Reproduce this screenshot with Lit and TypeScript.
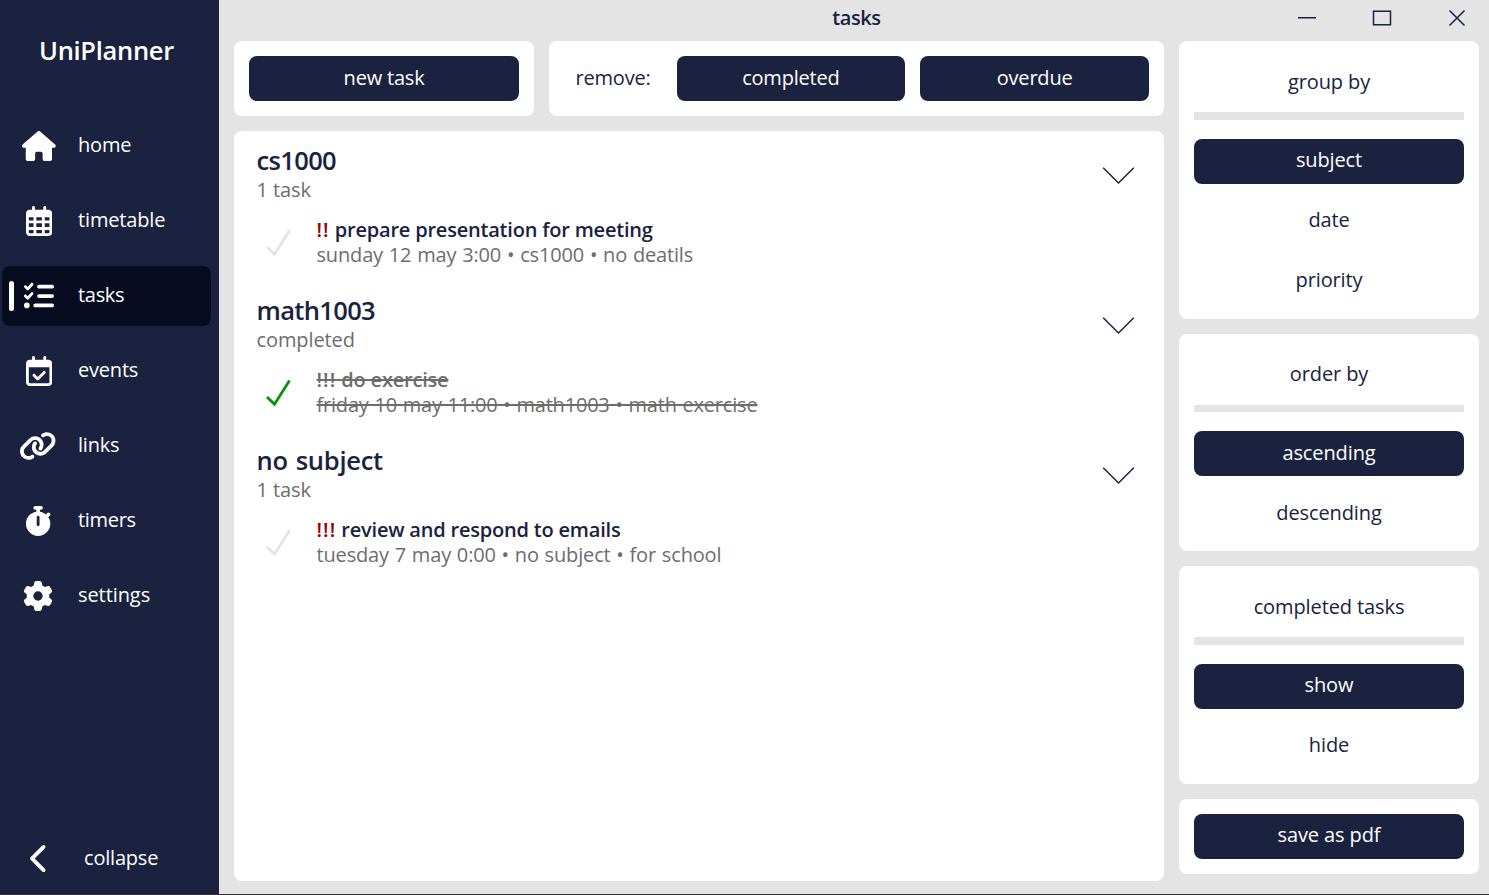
import { LitElement, html, css, svg } from "lit";
import { customElement, property } from "lit/decorators.js";
import { classMap } from "lit/directives/class-map.js";

type Icon = { w: number; d: string };

const ICONS: Record<string, Icon> = {
  home: { w: 576, d: "M575.8 255.5c0 18-15 32.1-32 32.1h-32l.7 160.2c0 2.7-.2 5.4-.5 8.1V472c0 22.1-17.9 40-40 40H456c-1.1 0-2.2 0-3.3-.1c-1.4 .1-2.8 .1-4.2 .1H416 392c-22.1 0-40-17.9-40-40V448 384c0-17.7-14.3-32-32-32H256c-17.7 0-32 14.3-32 32v64 24c0 22.1-17.9 40-40 40H160 128.1c-1.5 0-3-.1-4.5-.2c-1.2 .1-2.4 .2-3.6 .2H104c-22.1 0-40-17.9-40-40V360c0-.9 0-1.9 .1-2.8V287.6H32c-18 0-32-14-32-32.1c0-9 3-17 10-24L266.4 8c7-7 15-8 22-8s15 2 21 7L564.8 231.5c8 7 12 15 11 24z" },
  timetable: { w: 448, d: "M152 24c0-13.3-10.7-24-24-24s-24 10.7-24 24V64H64C28.7 64 0 92.7 0 128v16 48V448c0 35.3 28.7 64 64 64H384c35.3 0 64-28.7 64-64V192 144 128c0-35.3-28.7-64-64-64H344V24c0-13.3-10.7-24-24-24s-24 10.7-24 24V64H152V24zM48 192h80v56H48V192zm0 104h80v64H48V296zm128 0h96v64H176V296zm144 0h80v64H320V296zm80-48H320V192h80v56zm0 160v40c0 8.8-7.2 16-16 16H320V408h80zm-128 0v56H176V408h96zm-144 0v56H64c-8.8 0-16-7.2-16-16V408h80zM272 248H176V192h96v56z" },
  tasks: { w: 512, d: "M152.1 38.2c9.9 8.9 10.7 24 1.8 33.9l-72 80c-4.4 4.9-10.6 7.8-17.2 7.9s-12.9-2.4-17.6-7L7 113C-2.3 103.6-2.3 88.4 7 79s24.6-9.4 33.9 0l22.1 22.1 55.1-61.2c8.9-9.9 24-10.7 33.9-1.8zm0 160c9.9 8.9 10.7 24 1.8 33.9l-72 80c-4.4 4.9-10.6 7.8-17.2 7.9s-12.9-2.4-17.6-7L7 273c-9.4-9.4-9.4-24.6 0-33.9s24.6-9.4 33.9 0l22.1 22.1 55.1-61.2c8.9-9.9 24-10.7 33.9-1.8zM224 96c0-17.7 14.3-32 32-32H480c17.7 0 32 14.3 32 32s-14.3 32-32 32H256c-17.7 0-32-14.3-32-32zm0 160c0-17.7 14.3-32 32-32H480c17.7 0 32 14.3 32 32s-14.3 32-32 32H256c-17.7 0-32-14.3-32-32zM160 416c0-17.7 14.3-32 32-32H480c17.7 0 32 14.3 32 32s-14.3 32-32 32H192c-17.7 0-32-14.3-32-32zM48 368a48 48 0 1 1 0 96 48 48 0 1 1 0-96z" },
  events: { w: 448, d: "M128 0c13.3 0 24 10.7 24 24V64H296V24c0-13.3 10.7-24 24-24s24 10.7 24 24V64h40c35.3 0 64 28.7 64 64v16 48V448c0 35.3-28.7 64-64 64H64c-35.3 0-64-28.7-64-64V192 144 128C0 92.7 28.7 64 64 64h40V24c0-13.3 10.7-24 24-24zM400 192H48V448c0 8.8 7.2 16 16 16H384c8.8 0 16-7.2 16-16V192zM329 297L217 409c-9.4 9.4-24.6 9.4-33.9 0l-64-64c-9.4-9.4-9.4-24.6 0-33.9s24.6-9.4 33.9 0l47 47 95-95c9.4-9.4 24.6-9.4 33.9 0s9.4 24.6 0 33.9z" },
  links: { w: 640, d: "M579.8 267.7c56.5-56.5 56.5-148 0-204.5c-50-50-128.8-56.5-186.3-15.4l-1.6 1.1c-14.4 10.3-17.7 30.3-7.4 44.6s30.3 17.7 44.6 7.4l1.6-1.1c32.1-22.9 76-19.3 103.8 8.6c31.5 31.5 31.5 82.5 0 114L422.3 334.8c-31.5 31.5-82.5 31.5-114 0c-27.9-27.9-31.5-71.8-8.6-103.8l1.1-1.6c10.3-14.4 6.9-34.4-7.4-44.6s-34.4-6.9-44.6 7.4l-1.1 1.6C206.5 251.2 213 330 263 380c56.5 56.5 148 56.5 204.5 0L579.8 267.7zM60.2 244.3c-56.5 56.5-56.5 148 0 204.5c50 50 128.8 56.5 186.3 15.4l1.6-1.1c14.4-10.3 17.7-30.3 7.4-44.6s-30.3-17.7-44.6-7.4l-1.6 1.1c-32.1 22.9-76 19.3-103.8-8.6C74 372 74 321 105.5 289.5L217.7 177.2c31.5-31.5 82.5-31.5 114 0c27.9 27.9 31.5 71.8 8.6 103.9l-1.1 1.6c-10.3 14.4-6.9 34.4 7.4 44.6s34.4 6.9 44.6-7.4l1.1-1.6C433.5 260.8 427 182 377 132c-56.5-56.5-148-56.5-204.5 0L60.2 244.3z" },
  timers: { w: 448, d: "M176 0c-17.7 0-32 14.3-32 32s14.3 32 32 32h16V98.4C92.3 113.8 16 200 16 304c0 114.9 93.1 208 208 208s208-93.1 208-208c0-41.8-12.3-80.7-33.5-113.2l24.1-24.1c12.5-12.5 12.5-32.8 0-45.3s-32.8-12.5-45.3 0L355.7 143c-28.1-23-62.2-38.8-99.7-44.6V64h16c17.7 0 32-14.3 32-32s-14.3-32-32-32H224 176zm72 192V320c0 13.3-10.7 24-24 24s-24-10.7-24-24V192c0-13.3 10.7-24 24-24s24 10.7 24 24z" },
  settings: { w: 512, d: "M495.9 166.6c3.2 8.7 .5 18.4-6.4 24.6l-43.3 39.4c1.1 8.3 1.7 16.8 1.7 25.4s-.6 17.1-1.7 25.4l43.3 39.4c6.9 6.2 9.6 15.9 6.4 24.6c-4.4 11.9-9.7 23.3-15.8 34.3l-4.7 8.1c-6.6 11-14 21.4-22.1 31.2c-5.9 7.2-15.7 9.6-24.5 6.8l-55.7-17.7c-13.4 10.3-28.2 18.9-44 25.4l-12.5 57.1c-2 9.1-9 16.3-18.2 17.8c-13.8 2.3-28 3.5-42.5 3.5s-28.7-1.2-42.5-3.5c-9.2-1.5-16.2-8.7-18.2-17.8l-12.5-57.1c-15.8-6.5-30.6-15.1-44-25.4L83.1 425.9c-8.8 2.8-18.6 .3-24.5-6.8c-8.1-9.8-15.5-20.2-22.1-31.2l-4.7-8.1c-6.1-11-11.4-22.4-15.8-34.3c-3.2-8.7-.5-18.4 6.4-24.6l43.3-39.4C64.6 273.1 64 264.6 64 256s.6-17.1 1.7-25.4L22.4 191.2c-6.9-6.2-9.6-15.9-6.4-24.6c4.4-11.9 9.7-23.3 15.8-34.3l4.7-8.1c6.6-11 14-21.4 22.1-31.2c5.9-7.2 15.7-9.6 24.5-6.8l55.7 17.7c13.4-10.3 28.2-18.9 44-25.4l12.5-57.1c2-9.1 9-16.3 18.2-17.8C227.3 1.2 241.5 0 256 0s28.7 1.2 42.5 3.5c9.2 1.5 16.2 8.7 18.2 17.8l12.5 57.1c15.8 6.5 30.6 15.1 44 25.4l55.7-17.7c8.8-2.8 18.6-.3 24.5 6.8c8.1 9.8 15.5 20.2 22.1 31.2l4.7 8.1c6.1 11 11.4 22.4 15.8 34.3zM256 336a80 80 0 1 0 0-160 80 80 0 1 0 0 160z" },
  collapse: { w: 320, d: "M9.4 233.4c-12.5 12.5-12.5 32.8 0 45.3l192 192c12.5 12.5 32.8 12.5 45.3 0s12.5-32.8 0-45.3L77.3 256 246.6 86.6c12.5-12.5 12.5-32.8 0-45.3s-32.8-12.5-45.3 0l-192 192z" },
};

const glyph = (name: string) => {
  const i = ICONS[name];
  return html`<svg class="glyph" viewBox="0 0 ${i.w} 512">${svg`<path d=${i.d}></path>`}</svg>`;
};

@customElement("nav-item")
class NavItem extends LitElement {
  @property() name = "";
  @property({ type: Boolean }) active = false;

  static styles = css`
    :host { display: block; height: 60px; }
    .item {
      display: grid; grid-template-columns: 76px 1fr; align-items: center;
      box-sizing: border-box; height: 60px; width: 209.4px; margin-left: 2px;
      border-radius: 8px; color: #fff; position: relative;
    }
    .active { background: #060b20; }
    .bar {
      position: absolute; left: 7px; top: 15px; width: 5px; height: 30px;
      border-radius: 2.5px; background: #fff;
    }
    .icon { display: flex; justify-content: center; padding-right: 2px; }
    .shift { padding-right: 4px; }
    .glyph { height: 30px; width: auto; fill: #fff; display: block; }
    .label { line-height: 28px; padding-bottom: 2px; }
    .timetable { letter-spacing: -0.15px; }
    .tasks, .timers { letter-spacing: -0.3px; }
    .settings { letter-spacing: -0.08px; }
  `;

  render() {
    const shift = ["links", "timers", "settings"].includes(this.name);
    return html`<div class=${classMap({ item: true, active: this.active })}>
      ${this.active ? html`<span class="bar"></span>` : null}
      <span class=${classMap({ icon: true, shift })}>${glyph(this.name)}</span>
      <span class="label ${this.name}">${this.name}</span>
    </div>`;
  }
}

@customElement("option-card")
class OptionCard extends LitElement {
  @property() heading = "";
  @property({ type: Array }) options: string[] = [];

  static styles = css`
    :host { display: block; background: #fff; border-radius: 8px; padding: 15px; }
    .heading { height: 48.5px; padding-top: 7.75px; line-height: 36px; text-align: center; box-sizing: border-box; letter-spacing: -0.1px; }
    .rule { height: 7.5px; background: #e4e4e4; margin: 7.75px 0 18.75px; }
    .options { display: grid; gap: 15px; }
    .option { height: 45px; line-height: 42.5px; text-align: center; border-radius: 8px; letter-spacing: -0.12px; }
    :host(.roomy) .option { line-height: 43px; }
    .on { background: #1a223f; color: #fff; }
  `;

  render() {
    return html`<div class="heading">${this.heading}</div>
      <div class="rule"></div>
      <div class="options">
        ${this.options.map((o, n) => html`<div class=${classMap({ option: true, on: n === 0 })}>${o}</div>`)}
      </div>`;
  }
}

type Task = { title: string; status: string; mark: string; name: string; info: string; done: boolean };

const TASKS: Task[] = [
  { title: "cs1000", status: "1 task", mark: "!!", name: "prepare presentation for meeting", info: "sunday 12 may 3:00 • cs1000 • no deatils", done: false },
  { title: "math1003", status: "completed", mark: "!!!", name: "do exercise", info: "friday 10 may 11:00 • math1003 • math exercise", done: true },
  { title: "no subject", status: "1 task", mark: "!!!", name: "review and respond to emails", info: "tuesday 7 may 0:00 • no subject • for school", done: false },
];

@customElement("task-group")
class TaskGroup extends LitElement {
  @property({ type: Object }) task!: Task;

  static styles = css`
    :host { display: block; height: 150px; }
    .head { display: flex; justify-content: space-between; height: 75px; padding: 0 29px 0 22.5px; box-sizing: border-box; }
    .title { font-size: 25.5px; font-weight: 600; line-height: 32px; padding-top: 13px; letter-spacing: -0.65px; }
    .words { letter-spacing: -0.25px; word-spacing: 1.5px; }
    .status { line-height: 28px; color: #6d6d6d; letter-spacing: -0.1px; }
    .fold { width: 33px; height: 20px; margin-top: 34px; fill: none; stroke: #1a223f; stroke-width: 1.5; }
    .task { display: flex; height: 75px; }
    .check { width: 26px; height: 28px; margin: 23px 25.5px 0 31px; fill: none; stroke: #e4e4e4; stroke-width: 2.8; flex: none; }
    .name { font-weight: 600; line-height: 25px; padding-top: 11px; }
    .info { line-height: 25px; color: #6d6d6d; word-spacing: 0.8px; letter-spacing: -0.16px; }
    .mark { color: #960000; letter-spacing: 1.1px; }
    .done .check { stroke: #0a930a; }
    .done .name, .done .info { color: #6d6d6d; text-decoration: line-through; text-decoration-thickness: 1.5px; }
    .done .info { letter-spacing: -0.2px; }
    .done .mark { color: inherit; }
  `;

  render() {
    const t = this.task;
    return html`<div class="head">
        <div>
          <div class=${classMap({ title: true, words: t.title.includes(" ") })}>${t.title}</div>
          <div class="status">${t.status}</div>
        </div>
        <svg class="fold" viewBox="0 0 33 20"><path d="M1.2 2.7 16.5 18 31.8 2.7"></path></svg>
      </div>
      <div class=${classMap({ task: true, done: t.done })}>
        <svg class="check" viewBox="0 0 26 28"><path d="M2 18 9.5 25.2 24.5 1.5"></path></svg>
        <div>
          <div class="name"><span class="mark">${t.mark}</span> ${t.name}</div>
          <div class="info">${t.info}</div>
        </div>
      </div>`;
  }
}

@customElement("app-root")
class AppRoot extends LitElement {
  static styles = css`
    :host {
      display: grid; grid-template-columns: 219px 1fr; box-sizing: border-box;
      width: 1489px; height: 895px; overflow: hidden;
      background: #e4e4e4; border-bottom: 1px solid #353333; color: #1a223f;
      font: 20px "Open Sans", "Noto Sans", sans-serif; letter-spacing: -0.2px; white-space: nowrap;
    }
    .side { background: #1a223f; color: #fff; display: flex; flex-direction: column; }
    .brand { font-size: 25.5px; font-weight: 600; line-height: 36px; margin: 32px 0 48px 39px; letter-spacing: -0.3px; }
    .nav { display: grid; gap: 15px; }
    .fold { margin-top: auto; height: 71px; display: grid; grid-template-columns: 84px 1fr; align-items: center; }
    .fold .glyph { height: 31px; width: auto; fill: #fff; display: block; margin-left: 29.5px; }
    .fold .label { padding-bottom: 2px; }
    .main { display: grid; grid-template-columns: 945px 300px; grid-template-rows: 41px 840px; padding-left: 15px; }
    .bar { grid-column: 1 / -1; display: grid; grid-template-columns: 1fr 205px; }
    .caption { text-align: center; font-weight: 600; line-height: 36px; padding-left: 205px; letter-spacing: -0.4px; }
    .window { display: grid; grid-template-columns: repeat(3, 75px); margin-left: -5px; height: 36px; align-items: center; justify-items: center; }
    .window svg { width: 20px; height: 20px; fill: none; stroke: #1a223f; stroke-width: 1.5; }
    .work { display: grid; grid-template-rows: 75px 750px; gap: 15px; width: 930px; }
    .tools { display: grid; grid-template-columns: 300px 615px; gap: 15px; }
    .card { background: #fff; border-radius: 8px; padding: 15px; box-sizing: border-box; }
    .button { background: #1a223f; color: #fff; border-radius: 8px; height: 45px; line-height: 43px; text-align: center; }
    .save { line-height: 42.5px; letter-spacing: -0.12px; }
    .remove { display: grid; grid-template-columns: 112.5px 1fr 1fr; }
    .remove .button + .button { margin-left: 7.5px; }
    .remove .first { margin-right: 7.5px; }
    .prompt { line-height: 43px; padding-left: 11.5px; }
    .list { background: #fff; border-radius: 8px; }
    .options { display: grid; gap: 15px; align-content: start; }
  `;

  render() {
    return html`
      <div class="side">
        <div class="brand">UniPlanner</div>
        <div class="nav">
          ${["home", "timetable", "tasks", "events", "links", "timers", "settings"].map(
            (n) => html`<nav-item .name=${n} ?active=${n === "tasks"}></nav-item>`
          )}
        </div>
        <div class="fold">${glyph("collapse")}<span class="label">collapse</span></div>
      </div>
      <div class="main">
        <div class="bar">
          <div class="caption">tasks</div>
          <div class="window">
            <svg viewBox="0 0 20 20"><path d="M1 9.75H19"></path></svg>
            <svg viewBox="0 0 20 20"><rect x="1.5" y="3.25" width="17" height="13.5"></rect></svg>
            <svg viewBox="0 0 20 20"><path d="M2.5 2.5 17.5 17.5M17.5 2.5 2.5 17.5"></path></svg>
          </div>
        </div>
        <div class="work">
          <div class="tools">
            <div class="card"><div class="button">new task</div></div>
            <div class="card remove">
              <div class="prompt">remove:</div>
              <div class="button first">completed</div>
              <div class="button">overdue</div>
            </div>
          </div>
          <div class="list">${TASKS.map((t) => html`<task-group .task=${t}></task-group>`)}</div>
        </div>
        <div class="options">
          <option-card heading="group by" .options=${["subject", "date", "priority"]}></option-card>
          <option-card class="roomy" heading="order by" .options=${["ascending", "descending"]}></option-card>
          <option-card heading="completed tasks" .options=${["show", "hide"]}></option-card>
          <div class="card"><div class="button save">save as pdf</div></div>
        </div>
      </div>`;
  }
}
